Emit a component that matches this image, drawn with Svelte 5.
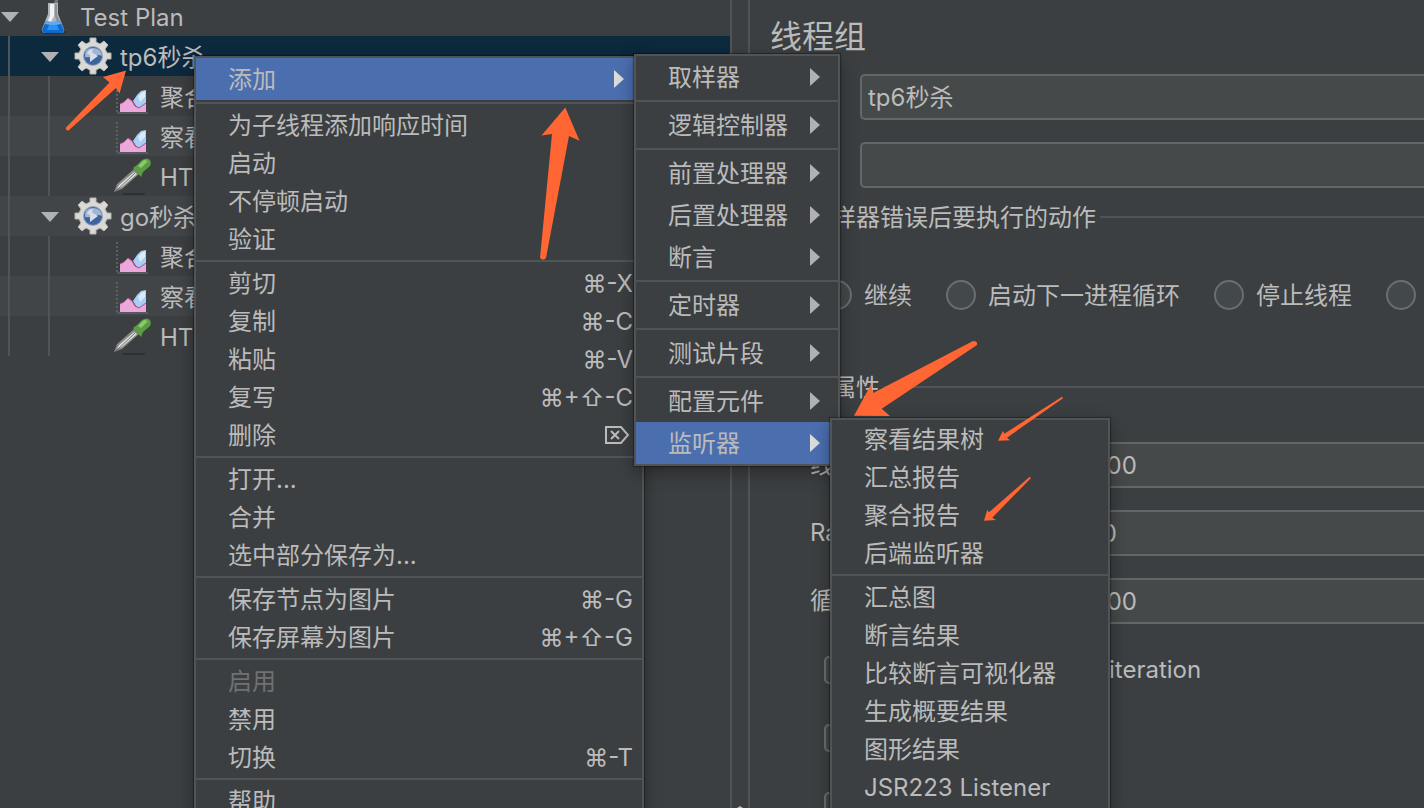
<script>
  const tree = [
    { label: 'Test Plan', level: 0, icon: 'flask', open: true },
    { label: 'tp6秒杀', level: 1, icon: 'gear', open: true, selected: true },
    { label: '聚合报告', level: 2, icon: 'chart' },
    { label: '察看结果树', level: 2, icon: 'chart' },
    { label: 'HTTP请求', level: 2, icon: 'dropper' },
    { label: 'go秒杀', level: 1, icon: 'gear', open: true },
    { label: '聚合报告', level: 2, icon: 'chart' },
    { label: '察看结果树', level: 2, icon: 'chart' },
    { label: 'HTTP请求', level: 2, icon: 'dropper' }
  ];

  const contextMenu = [
    [{ label: '添加', sub: true, active: true }],
    [{ label: '为子线程添加响应时间' }, { label: '启动' }, { label: '不停顿启动' }, { label: '验证' }],
    [
      { label: '剪切', keys: '⌘-X' },
      { label: '复制', keys: '⌘-C' },
      { label: '粘贴', keys: '⌘-V' },
      { label: '复写', keys: '⌘+⇧-C' },
      { label: '删除', keys: '⌦' }
    ],
    [{ label: '打开...' }, { label: '合并' }, { label: '选中部分保存为...' }],
    [{ label: '保存节点为图片', keys: '⌘-G' }, { label: '保存屏幕为图片', keys: '⌘+⇧-G' }],
    [{ label: '启用', disabled: true }, { label: '禁用' }, { label: '切换', keys: '⌘-T' }],
    [{ label: '帮助' }]
  ];

  const addMenu = [
    [{ label: '取样器', sub: true }],
    [{ label: '逻辑控制器', sub: true }],
    [{ label: '前置处理器', sub: true }, { label: '后置处理器', sub: true }, { label: '断言', sub: true }],
    [{ label: '定时器', sub: true }],
    [{ label: '测试片段', sub: true }],
    [{ label: '配置元件', sub: true }, { label: '监听器', sub: true, active: true }]
  ];

  const listenerMenu = [
    [{ label: '察看结果树' }, { label: '汇总报告' }, { label: '聚合报告' }, { label: '后端监听器' }],
    [
      { label: '汇总图' },
      { label: '断言结果' },
      { label: '比较断言可视化器' },
      { label: '生成概要结果' },
      { label: '图形结果' },
      { label: 'JSR223 Listener' }
    ]
  ];

  const errorActions = ['继续', '启动下一进程循环', '停止线程', '停止测试'];

  const threadFields = [
    { id: 'threads', label: '线程数：', value: '500' },
    { id: 'ramp', label: 'Ramp-Up时间（秒）：', value: '10' },
    { id: 'loops', label: '循环次数', value: '200' }
  ];

  const flags = ['Same user on each iteration', '延迟创建线程', '调度器'];
</script>

{#snippet icon(name)}
  {#if name === 'flask'}
    <svg class="icon" viewBox="0 0 40 40" aria-hidden="true">
      <ellipse cx="20" cy="36" rx="13" ry="2" fill="#2b2e30" />
      <path d="M15 7h10v11l6 15q1 4-3 4H12q-4 0-3-4l6-15z" fill="#aeb4b9" />
      <path d="M17 8h4v12l-4 8h-3l3-9z" fill="#f0f3f5" />
      <path d="M22 8h2v11l3 7h-3l-2-6z" fill="#8b9197" />
      <path d="M13 25q7 2 14 0l4 9q0 3-3 3H12q-3 0-3-3z" fill="#0f68cf" />
      <path d="M13 25q7 2 14 0l1 3q-8 2-16 0z" fill="#62a9ee" />
      <path d="M16 29h8l2 5H14z" fill="#2a92f6" />
      <path d="M23 1h2v6h-4z" fill="#74777a" />
    </svg>
  {:else if name === 'gear'}
    <svg class="icon" viewBox="0 0 40 40" aria-hidden="true">
      <path
        d="M17 2h6v4l4 2 4-3 4 4-3 4 2 4h4v6h-4l-2 4 3 4-4 4-4-3-4 2v4h-6v-4l-4-2-4 3-4-4 3-4-2-4H2v-6h4l2-4-3-4 4-4 4 3 4-2z"
        fill="#dad9d6" stroke="#b5b4b1" stroke-width="1" />
      <circle cx="20" cy="20" r="10" fill="#8fa1bf" />
      <circle cx="20" cy="20" r="9" fill="#3d639d" />
      <path d="M12 21q-1-9 8-9 8 0 9 8-4-2-8 0t-9 1z" fill="#a3b5d0" />
      <path d="M14 18q1-5 6-5l-2 6z" fill="#d3dce9" />
      <path d="M17 15l8 5-8 6z" fill="#d5dfec" />
    </svg>
  {:else if name === 'chart'}
    <svg class="icon" viewBox="0 0 40 40" aria-hidden="true">
      <path d="M4 6v30" stroke="#5d6062" stroke-width="2" stroke-dasharray="2 2" />
      <path d="M4 37h31" stroke="#6e7173" stroke-width="1" />
      <path d="M20 25l4-6 4-4 5-1v13l-6 5-4-2z" fill="#a9cdf5" />
      <path d="M25 21l3-4 4-2v6l-5 5z" fill="#d8ecfc" />
      <path d="M7 36v-8l4-2 4-4 4 3 3 5 4 2 7-5v9z" fill="#eba8dd" />
      <path d="M7 28l4-2 4-4 4 3 3 5 4 2 7-5" fill="none" stroke="#c94a86" stroke-width="1" />
    </svg>
  {:else}
    <svg class="icon" viewBox="0 0 40 40" aria-hidden="true">
      <path d="M10 38h22" stroke="#2d3032" stroke-width="2" />
      <path d="M1 36l3-8L21 13l5 5L9 33z" fill="#858785" />
      <path d="M4 33L6 29 21 16l3 2L9 31z" fill="#dededb" />
      <path d="M3 35L22 17" stroke="#6d6f6e" stroke-width="1" />
      <path d="M20 12l4-3 5-5q5-3 8 0 2 4-1 7l-6 5-2 5z" fill="#5a9e42" />
      <path d="M25 10l6-6 4 1-7 7z" fill="#8bcb6b" />
    </svg>
  {/if}
{/snippet}

{#snippet menu(groups, kind)}
  <div class="menu {kind}" role="menu">
    {#each groups as group}
      <div class="group">
        {#each group as item}
          <button
            role="menuitem"
            class="item"
            class:sub={item.sub}
            class:active={item.active}
            disabled={item.disabled}
          >
            <span>{item.label}</span>
            {#if item.keys === '⌦'}
              <svg class="del" viewBox="0 0 26 20" role="img" aria-label="Delete">
                <path d="M2 2h15l7 8-7 8H2z M7 6l8 8 M15 6l-8 8" fill="none" stroke="currentColor" stroke-width="2" />
              </svg>
            {:else if item.keys}
              <kbd>{item.keys}</kbd>
            {/if}
          </button>
        {/each}
      </div>
    {/each}
  </div>
{/snippet}

<div class="app">
  <div class="tree" role="tree">
    {#each tree as node}
      <div class="row" class:selected={node.selected} role="treeitem" aria-selected={!!node.selected}>
        {#each Array(node.level) as _}
          <span class="guide"></span>
        {/each}
        {#if node.level < 2}
          <svg class="twisty" viewBox="0 0 18 10" aria-hidden="true"><path d="M0 0h18l-9 10z" fill="currentColor" /></svg>
        {:else}
          <span class="twisty"></span>
        {/if}
        {@render icon(node.icon)}
        <span class="label">{node.label}</span>
      </div>
    {/each}
  </div>

  <div class="splitter">
    <svg viewBox="0 0 6 2" aria-hidden="true"><path d="M0 2l3-2 3 2z" fill="#bbb" /></svg>
  </div>

  <form class="panel">
    <h1>线程组</h1>
    <div class="fields head">
      <label for="name">名称：</label>
      <input id="name" type="text" value="tp6秒杀" />
      <label for="notes">注释：</label>
      <input id="notes" type="text" value="" />
    </div>

    <h2><span>在取样器错误后要执行的动作</span></h2>
    <div class="radios">
      {#each errorActions as action}
        <label><input type="radio" name="on-error" /><span>{action}</span></label>
      {/each}
    </div>

    <h2 class="second"><span>线程属性</span></h2>
    <div class="fields threads">
      {#each threadFields as field}
        <label for={field.id}>{field.label}</label>
        <input id={field.id} type="text" value={field.value} />
      {/each}
    </div>
    <div class="flags">
      {#each flags as flag}
        <label><input type="checkbox" />{flag}</label>
      {/each}
    </div>
  </form>

  {@render menu(contextMenu, 'context')}
  {@render menu(addMenu, 'add')}
  {@render menu(listenerMenu, 'listeners')}

  <svg class="marks" width="1424" height="808" viewBox="0 0 1424 808" aria-hidden="true">
    <g fill="#ff6633">
      <path d="M126 70.500L103 77l6.500 5.500L66 127.500q-1 3 2.500 3L116 88l3.500 5.500z" />
      <path d="M565.300 107.500L579.500 140.700 569 136 546 258q-3 3.500-6 0L552 134l-10.500 1.500z" />
      <path d="M854 415.700L871.300 384l1.400 9.300L973 341q5 0 4 4L881.700 408.700 890 416z" />
      <path d="M998 440.700l5-10 1.300 3L1062 396.700l1 1.600L1007 437.700l3 2.600z" />
      <path d="M984 520.700l3.300-11 1.700 2.600L1029.700 476.700l1.300 1.300L992.300 517.700l3.700 2.300z" />
    </g>
  </svg>
</div>

<style>
  :global(body) {
    margin: 0;
    background: #3c3f41;
  }

  .app {
    position: relative;
    display: flex;
    height: 100vh;
    overflow: hidden;
    background: #3c3f41;
    color: #bbb;
    font: 400 24px/30px Inter, 'Noto Sans CJK SC', sans-serif;
  }

  .app :is(input, button, kbd) {
    font: inherit;
    color: inherit;
  }

  .tree {
    flex: 0 0 730px;
    margin-top: -4px;
    overflow: hidden;
    border-right: 2px solid #515456;
  }

  .row {
    display: flex;
    align-items: center;
    height: 40px;
    white-space: nowrap;
  }

  .row:nth-child(even) {
    background: #414547;
  }

  .row.selected {
    background: #0d293e;
  }

  .guide {
    box-sizing: border-box;
    flex: 0 0 40px;
    height: 40px;
    background: linear-gradient(#515456, #515456) 8px 0 / 2px 100% no-repeat;
  }

  .twisty {
    flex: 0 0 18px;
    height: 10px;
    margin: 2px 14px 0 1px;
    color: #afb1b3;
  }

  .icon {
    flex: 0 0 40px;
    height: 40px;
    margin-right: 7px;
  }

  .label {
    padding-top: 4px;
  }

  .splitter {
    display: flex;
    flex: 0 0 16px;
    align-items: flex-end;
    justify-content: center;
    border-right: 2px solid #515456;
  }

  .splitter svg {
    width: 6px;
    height: 2px;
  }

  .panel {
    flex: 1;
    min-width: 0;
    padding: 14px 0 0 20px;
    white-space: nowrap;
  }

  h1 {
    margin: 0 0 14px;
    font-size: 32px;
    font-weight: 400;
    line-height: 46px;
  }

  h2 {
    display: flex;
    align-items: center;
    gap: 4px;
    height: 30px;
    margin: 14px 0 48px;
    padding-left: 14px;
    font-size: 24px;
    font-weight: 400;
    line-height: 30px;
  }

  h2::after {
    content: '';
    flex: 1;
    height: 2px;
    background: #515456;
  }

  h2.second {
    margin: 62px 0 40px;
  }

  h2 span,
  .radios span,
  .item span,
  .item kbd {
    padding-top: 2px;
  }

  .fields {
    display: grid;
    align-items: center;
    row-gap: 22px;
  }

  .fields input {
    box-sizing: border-box;
    width: 100%;
    min-width: 0;
    height: 46px;
    padding: 0 6px;
    border: 2px solid #646668;
    border-right: 0;
    border-radius: 5px 0 0 5px;
    background: #45494a;
  }

  .head {
    grid-template-columns: 90px 1fr;
  }

  .head input {
    padding-bottom: 4px;
  }

  .threads {
    grid-template-columns: 274px 1fr;
    padding-left: 40px;
  }

  .radios,
  .flags {
    display: flex;
  }

  .radios {
    gap: 34px;
    height: 30px;
    margin-left: 52px;
  }

  .radios label,
  .flags label {
    display: flex;
    flex: none;
    align-items: center;
    gap: 12px;
  }

  .radios input,
  .flags input {
    appearance: none;
    box-sizing: border-box;
    width: 30px;
    height: 30px;
    margin: 0;
    border: 2px solid #6b6e70;
    border-radius: 50%;
    background: #43494a;
  }

  .flags {
    flex-direction: column;
    gap: 40px;
    margin: 32px 0 0 54px;
  }

  .flags label {
    gap: 32px;
    height: 28px;
  }

  .flags input {
    width: 28px;
    height: 28px;
    border-radius: 5px;
  }

  .menu {
    position: absolute;
    border: 2px solid #515456;
    background: #3c3f41;
    box-shadow: 0 0 1px 1px rgba(0, 0, 0, 0.3), 0 6px 16px rgba(0, 0, 0, 0.35);
  }

  .context {
    top: 56px;
    left: 194px;
    width: 446px;
  }

  .add {
    top: 54px;
    left: 634px;
    width: 202px;
  }

  .listeners {
    top: 418px;
    left: 830px;
    width: 276px;
    padding-bottom: 6px;
  }

  .group + .group {
    padding-top: 6px;
    background: linear-gradient(#515456, #515456) 0 2px / 100% 2px no-repeat;
  }

  .item {
    display: flex;
    align-items: center;
    justify-content: space-between;
    width: 100%;
    height: 38px;
    padding: 0 9px 0 32px;
    border: 0;
    background: none;
    text-align: left;
    white-space: nowrap;
  }

  .item.sub {
    height: 42px;
    padding-right: 18px;
  }

  .item.sub::after {
    content: '';
    border: solid transparent;
    border-width: 9px 0 9px 10px;
    border-left-color: #afb1b3;
  }

  .item.active {
    background: #4b6eaf;
  }

  .item.active::after {
    border-left-color: #dcdcdc;
  }

  .item:disabled {
    color: #6f7173;
  }

  .del {
    width: 26px;
    height: 20px;
    margin-right: 3px;
  }

  .marks {
    position: absolute;
    top: 0;
    left: 0;
    pointer-events: none;
  }
</style>
